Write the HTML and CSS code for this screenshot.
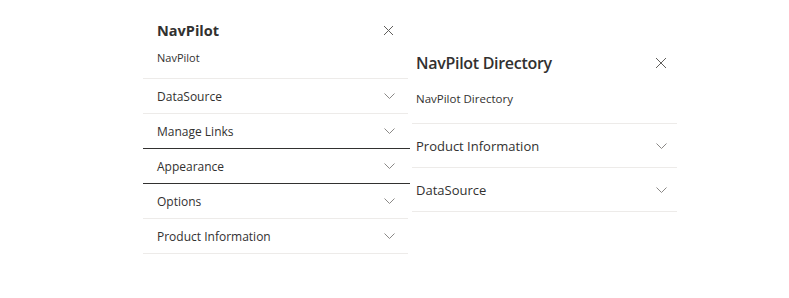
FILE: index.html
```html
<!DOCTYPE html>
<html>
<head>
    <title>NavPilot Settings</title>
    <link rel="stylesheet" href="styles.css">
</head>
<body>
    <div class="stage">
        <div class="panel panel-settings">
            <div class="panel-header">
                <h2>NavPilot</h2>
                <button class="close-btn" aria-label="Close">
                    <svg width="11" height="11" viewBox="0 0 11 11"><path d="M1 1L10 10M10 1L1 10" /></svg>
                </button>
            </div>
            <p class="panel-sub">NavPilot</p>
            <div class="group">
                <div class="group-row"><span>DataSource</span><svg class="chev" width="11" height="6" viewBox="0 0 11 6"><path d="M0.5 0.5L5.5 5.5L10.5 0.5" /></svg></div>
                <div class="group-row"><span>Manage Links</span><svg class="chev" width="11" height="6" viewBox="0 0 11 6"><path d="M0.5 0.5L5.5 5.5L10.5 0.5" /></svg></div>
                <div class="group-row active"><span>Appearance</span><svg class="chev" width="11" height="6" viewBox="0 0 11 6"><path d="M0.5 0.5L5.5 5.5L10.5 0.5" /></svg></div>
                <div class="group-row"><span>Options</span><svg class="chev" width="11" height="6" viewBox="0 0 11 6"><path d="M0.5 0.5L5.5 5.5L10.5 0.5" /></svg></div>
                <div class="group-row"><span>Product Information</span><svg class="chev" width="11" height="6" viewBox="0 0 11 6"><path d="M0.5 0.5L5.5 5.5L10.5 0.5" /></svg></div>
            </div>
        </div>

        <div class="panel panel-directory">
            <div class="panel-header">
                <h2>NavPilot Directory</h2>
                <button class="close-btn" aria-label="Close">
                    <svg width="12" height="12" viewBox="0 0 12 12"><path d="M1 1L11 11M11 1L1 11" /></svg>
                </button>
            </div>
            <p class="panel-sub">NavPilot Directory</p>
            <div class="group">
                <div class="group-row"><span>Product Information</span><svg class="chev" width="11" height="6" viewBox="0 0 11 6"><path d="M0.5 0.5L5.5 5.5L10.5 0.5" /></svg></div>
                <div class="group-row"><span>DataSource</span><svg class="chev" width="11" height="6" viewBox="0 0 11 6"><path d="M0.5 0.5L5.5 5.5L10.5 0.5" /></svg></div>
            </div>
        </div>
    </div>
</body>
</html>
```

FILE: styles.css
```css
* {
    margin: 0;
    padding: 0;
    box-sizing: border-box;
}

body {
    font-family: "Open Sans", "Noto Sans", sans-serif;
    background: #ffffff;
    color: #323130;
}

.stage {
    display: flex;
    align-items: flex-start;
    gap: 4px;
    padding-left: 143px;
}

.panel {
    width: 265px;
}

.panel-header {
    display: flex;
    justify-content: space-between;
    align-items: center;
}

.panel-header h2 {
    font-weight: 700;
}

.close-btn {
    background: none;
    border: none;
    display: flex;
    align-items: center;
    justify-content: center;
}

.close-btn svg path,
.chev path {
    fill: none;
    stroke: #605e5c;
    stroke-width: 1;
}

.chev path {
    stroke: #8a8886;
}

.group-row {
    display: flex;
    justify-content: space-between;
    align-items: center;
    border-bottom: 1px solid #edebe9;
}

/* left settings pane */
.panel-settings {
    padding-top: 18px;
}

.panel-settings .panel-header {
    padding-left: 14px;
    padding-right: 14px;
    height: 24px;
}

.panel-settings h2 {
    font-size: 14.5px;
}

.panel-settings .panel-sub {
    font-size: 11px;
    padding: 8px 14px 0;
    line-height: 16px;
    height: 37px;
    border-bottom: 1px solid #edebe9;
}

.panel-settings .group-row {
    height: 35px;
    padding: 0 13px 0 14px;
    font-size: 12px;
}

.panel-settings .group-row:nth-child(2),
.panel-settings .group-row.active {
    border-bottom-color: #323130;
    margin-right: -2px;
    padding-right: 15px;
}

/* right directory pane */
.panel-directory {
    padding-top: 50px;
}

.panel-directory .panel-header {
    padding-left: 4px;
    padding-right: 10px;
    height: 26px;
}

.panel-directory h2 {
    font-size: 16px;
    font-weight: 600;
    letter-spacing: -0.3px;
}

.panel-directory .panel-sub {
    font-size: 11.5px;
    padding: 14px 4px 0;
    line-height: 17px;
    height: 48px;
    border-bottom: 1px solid #edebe9;
}

.panel-directory .group-row {
    height: 44px;
    padding: 0 10px 0 4px;
    font-size: 13px;
}
```
